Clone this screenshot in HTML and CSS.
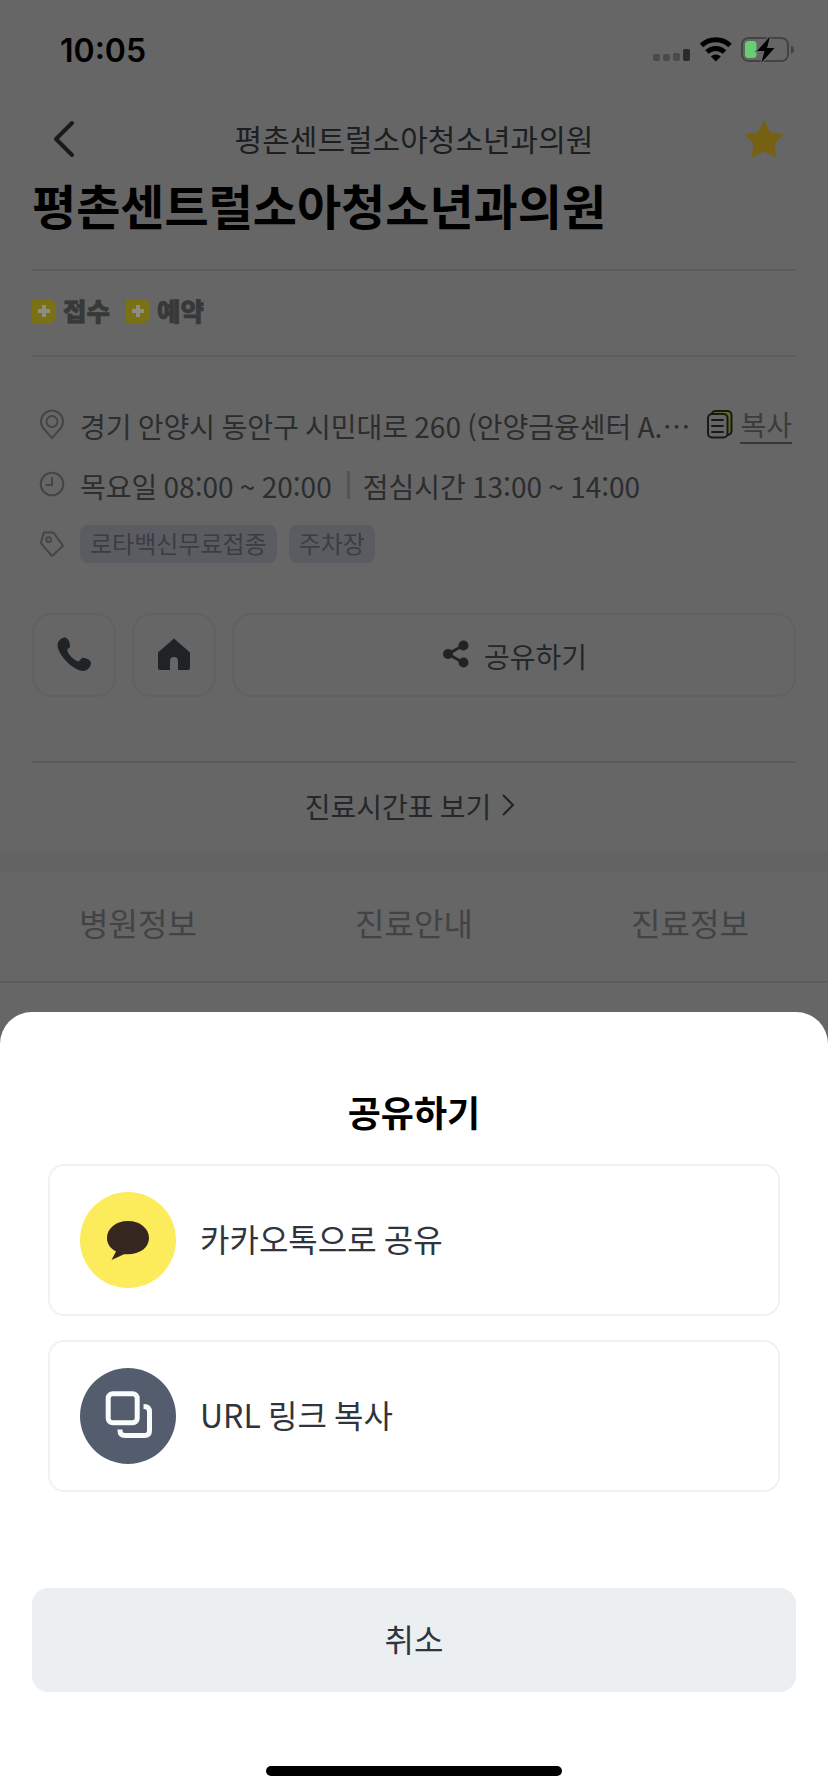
FILE: index.html
```html
<!DOCTYPE html>
<html lang="ko">
<head>
<meta charset="utf-8">
<title>평촌센트럴소아청소년과의원</title>
<link rel="stylesheet" href="styles.css">
</head>
<body>
<div class="screen">
  <main class="page">
    <div class="status">
      <span class="time">10:05</span>
      <svg class="status-icons" width="142" height="28" viewBox="0 0 142 28">
        <g fill="#4a4a4a"><rect x="0" y="18" width="7" height="7" rx="2"/><rect x="10" y="18" width="7" height="7" rx="2"/><rect x="20" y="17" width="7" height="8" rx="2"/></g>
        <rect x="30" y="13" width="7" height="12" rx="2" fill="#2b2b2b"/>
        <g fill="none" stroke="#000" stroke-width="5"><path d="M48.5 9.5a20.500 20.500 0 0 1 28.500 0"/><path d="M54 16a12.500 12.500 0 0 1 17.500 0"/></g>
        <path d="M57.800 20.500a7 7 0 0 1 10 0L62.800 25.500z" fill="#000"/>
        <rect x="89" y="2" width="46" height="23" rx="6.500" fill="none" stroke="#434343" stroke-width="2"/>
        <path d="M138 9.500v8.500q3-1 3-4.250t-3-4.250z" fill="#434343"/>
        <rect x="92" y="5" width="11.500" height="17" rx="3.500" fill="#67ce72"/>
        <path d="M117 0.500 104 15h7.500l-3 11.500L121.500 12H114z" fill="#000" stroke="#666" stroke-width="2.500" paint-order="stroke"/>
      </svg>
    </div>
    <header class="nav">
      <svg class="back" width="24" height="40" viewBox="0 0 24 40"><path d="M20 4 4 20 20 36" fill="none" stroke="#17191a" stroke-width="4" stroke-linecap="round" stroke-linejoin="round"/></svg>
      <span class="nav-title">평촌센트럴소아청소년과의원</span>
      <svg class="star" width="40" height="40" viewBox="0 0 40 40"><path d="M20 1 26 13.500 39.500 15 30.500 25 32.500 38.500 20 32.500 7.500 38.500 9.500 25 .5 15 14 13.500z" fill="#766012"/></svg>
    </header>
    <h1 class="title">평촌센트럴소아청소년과의원</h1>
    <div class="badges">
      <span class="badge"><svg width="24" height="24" viewBox="0 0 24 24"><path d="M0 0h19l5 5v14l-5 5H0z" fill="#7a7115"/><path d="M12 6v12M6 12h12" stroke="#8d8d86" stroke-width="4"/></svg><span class="badge-text">접수</span></span>
      <span class="badge"><svg width="24" height="24" viewBox="0 0 24 24"><path d="M0 0h19l5 5v14l-5 5H0z" fill="#7a7115"/><path d="M12 6v12M6 12h12" stroke="#8d8d86" stroke-width="4"/></svg><span class="badge-text">예약</span></span>
    </div>
    <section class="info">
      <div class="row address">
        <svg class="lead" width="26" height="32" viewBox="0 0 26 32" fill="none" stroke="#454545" stroke-width="2"><path d="M13 30 4.500 20.500A11 11 0 1 1 21.500 20.500z"/><circle cx="13" cy="13.500" r="5.500"/></svg>
        <span class="text">경기 안양시 동안구 시민대로 260 (안양금융센터 A.⋯</span>
        <svg class="copy-icon" width="28" height="30" viewBox="0 0 28 30" stroke="#16181a" stroke-width="2"><rect x="5.500" y="2" width="20" height="24" rx="4" fill="#68681f"/><rect x="2" y="5" width="19.500" height="23.500" rx="4" fill="#666"/><path d="M6 11h11M6 17h11M6 23h11" stroke-linecap="round"/></svg>
        <a class="copy">복사</a>
      </div>
      <div class="row hours">
        <svg class="lead" width="26" height="26" viewBox="0 0 26 26" fill="none" stroke="#454545" stroke-width="2"><circle cx="13" cy="13" r="11.300"/><path d="M13 6v8H6.500"/></svg>
        <span class="text">목요일 08:00 ~ 20:00</span><i class="sep"></i><span class="text">점심시간 13:00 ~ 14:00</span>
      </div>
      <div class="row tags">
        <svg class="lead" width="27" height="28" viewBox="0 0 27 28" fill="none" stroke="#454545" stroke-width="2" stroke-linejoin="round"><path d="M5 2h10L25 16 13.500 26.500 2 13z"/><circle cx="10" cy="9.500" r="2.500"/></svg>
        <span class="chip">로타백신무료접종</span><span class="chip">주차장</span>
      </div>
    </section>
    <div class="actions">
      <button class="btn"><svg width="36" height="36" viewBox="0 0 36 36"><path d="M1.500 8.500C2 4.500 6 1 9.500 1.500 12 2 14.500 7.500 14 10.500 13.500 12.500 11 12.500 11.300 14.500 12.500 19 18 24 22 25.500 24 25.500 24.500 22 27 21.800 30 22 35 24 35 27 35 31 31 35 27.500 35 17 34.500 1.500 19 1.500 8.500z" fill="#202325"/></svg></button>
      <button class="btn"><svg width="34" height="34" viewBox="0 0 34 34"><path d="M17 1.500 33 15.500V31q0 2-2 2H21V24q0-4-4-4t-4 4v9H3q-2 0-2-2V15.500z" fill="#202325"/></svg></button>
      <button class="btn share"><svg width="26" height="28" viewBox="0 0 26 28"><path d="M20 5.500 5 14l15 8.500" fill="none" stroke="#202325" stroke-width="2.800"/><g fill="#202325"><circle cx="20.500" cy="5.500" r="5"/><circle cx="5" cy="14" r="5"/><circle cx="20.500" cy="22.500" r="5"/></g></svg><span class="share-text">공유하기</span></button>
    </div>
    <div class="schedule">진료시간표 보기<svg width="14" height="24" viewBox="0 0 14 24"><path d="M2 2 12 12 2 22" fill="none" stroke="#202325" stroke-width="2"/></svg></div>
    <nav class="tabs"><span>병원정보</span><span>진료안내</span><span>진료정보</span></nav>
  </main>
  <section class="sheet">
    <h2 class="sheet-title">공유하기</h2>
    <div class="option">
      <span class="circle kakao"><svg width="44" height="42" viewBox="0 0 44 42"><path d="M22 2C10 2 1 9.500 1 19c0 6 3.500 10.500 9 13.500L5.500 41 18 35.200C33 36.500 43 29 43 19 43 9.500 34 2 22 2z" fill="#35261f"/></svg></span><span class="option-text">카카오톡으로 공유</span>
    </div>
    <div class="option">
      <span class="circle link"><svg width="50" height="50" viewBox="0 0 50 50" fill="none" stroke="#f8fcfd" stroke-width="5"><rect x="5.200" y="2.700" width="29" height="29" rx="4.500"/><path d="M40.500 15.500h.5q5.500 0 5.500 5.500V39.500q0 5-5 5H22q-5 0-5-5v-1"/></svg></span><span class="option-text">URL 링크 복사</span>
    </div>
    <button class="cancel">취소</button>
    <div class="home-bar"></div>
  </section>
</div>
</body>
</html>
```
FILE: styles.css
```css
* { box-sizing: border-box; word-spacing: -0.055em; }
body { margin: 0; background: #666; font-family: "Noto Sans CJK KR", sans-serif; }
svg { display: block; flex: none; }
button { font: inherit; color: inherit; margin: 0; padding: 0; }
.screen { width: 828px; height: 1792px; overflow: hidden; background: #666; display: flex; flex-direction: column; }
.page { height: 1012px; flex: none; display: flex; flex-direction: column; }
.status { height: 100px; flex: none; display: flex; justify-content: space-between; padding: 30px 33px 0 60px; }
.time { font: 600 32px/41px Inter, sans-serif; color: #000; }
.status-icons { margin-top: 6px; }
.nav { height: 80px; flex: none; display: flex; align-items: center; justify-content: space-between; padding: 0 44px 0 52px; }
.back { margin-top: -2px; }
.star { margin-top: -2px; }
.nav-title { font-size: 30px; line-height: 44px; color: #1c1f21; margin-left: 8px; margin-top: -5px; }
.title { margin: -1px 32px 0; height: 92px; flex: none; border-bottom: 2px solid #5c5d5d; font-size: 48px; line-height: 50px; font-weight: 700; color: #000; }
.badges { margin: 0 32px; height: 86px; flex: none; border-bottom: 2px solid #5c5d5d; display: flex; gap: 16px; align-items: center; padding-bottom: 4px; }
.badge { display: flex; align-items: center; gap: 7px; }
.badge-text { font-size: 25.5px; line-height: 30px; font-weight: 900; color: #373938; -webkit-text-stroke: 0.7px #373938; padding-bottom: 3px; }
.info { padding: 47px 36px 0 40px; flex: none; }
.row { display: flex; align-items: center; height: 60px; font-size: 28px; line-height: 40px; color: #2b2d2e; white-space: nowrap; }
.text { padding-top: 2px; }
.lead { width: 26px; margin-left: -1px; margin-right: 15px; }
.address { height: 42px; }
.address .lead { margin-top: -2px; }
.copy-icon { margin-left: auto; margin-right: 6px; margin-top: -2px; }
.copy { color: #3b3c3d; border-bottom: 2px solid #343637; line-height: 35px; }
.hours { margin-top: 9px; }
.hours .lead { margin-top: -2px; }
.sep { width: 3px; height: 28px; background: #555; margin: 0 13px 0 15px; }
.tags { height: 38px; margin-top: 10px; }
.chip { height: 38px; border-radius: 8px; background: #5b5c62; color: #3b3c45; padding: 0 10px; font-size: 24px; line-height: 36px; margin-right: 12px; }
.actions { display: flex; gap: 16px; margin: 50px 32px 0; flex: none; }
.btn { width: 84px; height: 84px; border: 2px solid #606161; border-radius: 20px; background: none; display: flex; align-items: center; justify-content: center; }
.btn svg { margin-bottom: 2px; }
.share { flex: 1; gap: 15px; font-size: 28px; color: #25282a; padding-left: 2px; }
.share-text { padding-top: 2px; }
.schedule { margin: 64px 32px 0; height: 92px; flex: none; border-top: 2px solid #5a5b5b; display: flex; align-items: center; justify-content: center; gap: 10px; font-size: 28px; color: #25282a; padding: 0 8px 4px 0; }
.schedule svg { margin-top: -2px; }
.tabs { border-top: 19px solid #636363; border-bottom: 2px solid #5b5c5c; height: 130px; flex: none; display: grid; grid-template-columns: repeat(3, 1fr); text-align: center; font-size: 32px; line-height: 100px; color: #424344; }
.sheet { flex: 1; background: #fff; border-radius: 32px 32px 0 0; display: flex; flex-direction: column; }
.sheet-title { margin: 75px 0 29px; text-align: center; font-size: 36px; line-height: 48px; font-weight: 700; color: #000; }
.option { margin: 0 48px 24px; height: 152px; flex: none; border: 2px solid #eff1f2; border-radius: 16px; display: flex; align-items: center; padding-left: 30px; gap: 24px; font-size: 32px; color: #30343d; }
.option-text { padding-bottom: 4px; }
.circle { width: 96px; height: 96px; border-radius: 50%; display: flex; align-items: center; justify-content: center; }
.kakao { background: #fceb5b; }
.link { background: #535d6e; }
.cancel { margin: 72px 32px 0; height: 104px; flex: none; border: 0; border-radius: 16px; background: #ebeff2; font-size: 32px; color: #30343d; padding-bottom: 4px; }
.home-bar { width: 296px; height: 10px; border-radius: 5px; background: #000; margin: 74px auto 0; }
```
